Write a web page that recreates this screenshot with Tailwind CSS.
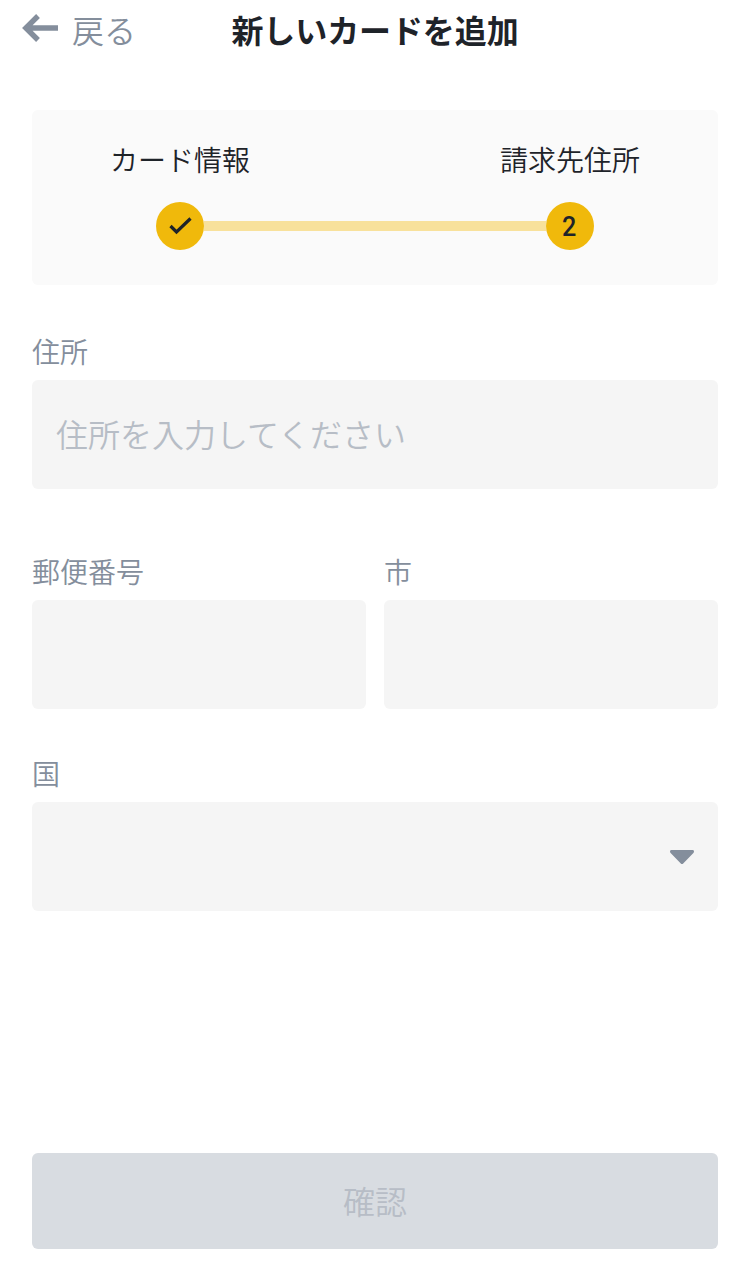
<!DOCTYPE html>
<html lang="ja">

<head>
  <meta charset="UTF-8">
  <meta name="viewport" content="width=device-width, initial-scale=1.0">
  <title>新しいカードを追加</title>
  <script src="https://cdn.jsdelivr.net/npm/@tailwindcss/browser@4"></script>
</head>

<body class="min-h-screen bg-white font-['Noto_Sans_CJK_JP',sans-serif] font-[350] text-[#1e2329]">
  <div class="flex flex-col min-h-screen px-8 pb-8">
    <header class="grid grid-cols-[1fr_auto_1fr] items-center h-[62px] -ml-[10px] -mr-[10px] pb-1">
      <a href="#" class="flex items-center gap-[14px] text-[32px] leading-none text-[#848e9c]">
        <svg class="w-9 h-7 -mt-[2px]" viewBox="0 0 36 28" fill="none" stroke="currentColor" stroke-width="5.4">
          <path d="M16 2L3.900 14 16 26M4 14h32" />
        </svg>
        <span>戻る</span>
      </a>
      <h1 class="text-[32px] leading-none font-bold tracking-[-0.1px]">新しいカードを追加</h1>
    </header>

    <section class="mt-12 h-[175px] rounded-md bg-[#fafafa] pt-[31px]">
      <div class="flex justify-between px-[78px] text-[28px] leading-9">
        <span>カード情報</span>
        <span>請求先住所</span>
      </div>
      <div class="flex items-center px-[124px] mt-[25px]">
        <div class="flex items-center justify-center size-12 rounded-full bg-[#f0b90b]">
          <svg class="w-6 h-5" viewBox="0 0 24 20" fill="none" stroke="currentColor" stroke-width="3.2">
            <path d="M2.500 10l6 6L22.500 2.500" />
          </svg>
        </div>
        <div class="flex-1 h-[10px] bg-[#f8e19b]"></div>
        <div class="flex items-center justify-center size-12 rounded-full bg-[#f0b90b] font-[Roboto,sans-serif] text-[28px] leading-none font-medium">
          <span class="inline-block scale-x-90 pt-[2px] pr-[2px]">2</span>
        </div>
      </div>
    </section>

    <form class="flex flex-col flex-1">
      <div class="mt-[46px]">
        <label for="address" class="block h-[49px] text-[28px] leading-10 text-[#848e9c]">住所</label>
        <input type="text" id="address" placeholder="住所を入力してください"
          class="block w-full h-[109px] rounded-md bg-[#f5f5f5] px-6 pb-[3px] text-[32px] placeholder:text-[#b7bdc6]">
      </div>
      <div class="grid grid-cols-2 gap-[18px] mt-[62px]">
        <div>
          <label for="zip" class="block h-[49px] text-[28px] leading-10 text-[#848e9c]">郵便番号</label>
          <input type="text" id="zip" class="block w-full h-[109px] rounded-md bg-[#f5f5f5] px-6 text-[32px]">
        </div>
        <div>
          <label for="city" class="block h-[49px] text-[28px] leading-10 text-[#848e9c]">市</label>
          <input type="text" id="city" class="block w-full h-[109px] rounded-md bg-[#f5f5f5] px-6 text-[32px]">
        </div>
      </div>
      <div class="mt-11">
        <label for="country" class="block h-[49px] text-[28px] leading-10 text-[#848e9c]">国</label>
        <button type="button" id="country" class="flex items-center justify-end w-full h-[109px] rounded-md bg-[#f5f5f5] px-6">
          <svg class="w-6 h-[14px] text-[#848e9c]" viewBox="0 0 24 14" fill="currentColor">
            <path d="M1.500 0h21C23.500 0 24 .6 24 1.500c0 .6-.2 1-.6 1.400L13.200 13.400c-.7.7-1.700.7-2.400 0L.6 2.900C.2 2.500 0 2.100 0 1.500 0 .6.5 0 1.500 0z" />
          </svg>
        </button>
      </div>
      <button type="button" disabled
        class="mt-auto w-full h-24 pb-[2px] rounded-md bg-[#d8dce1] text-[32px] text-[#b7bdc6]">確認</button>
    </form>
  </div>
</body>

</html>
